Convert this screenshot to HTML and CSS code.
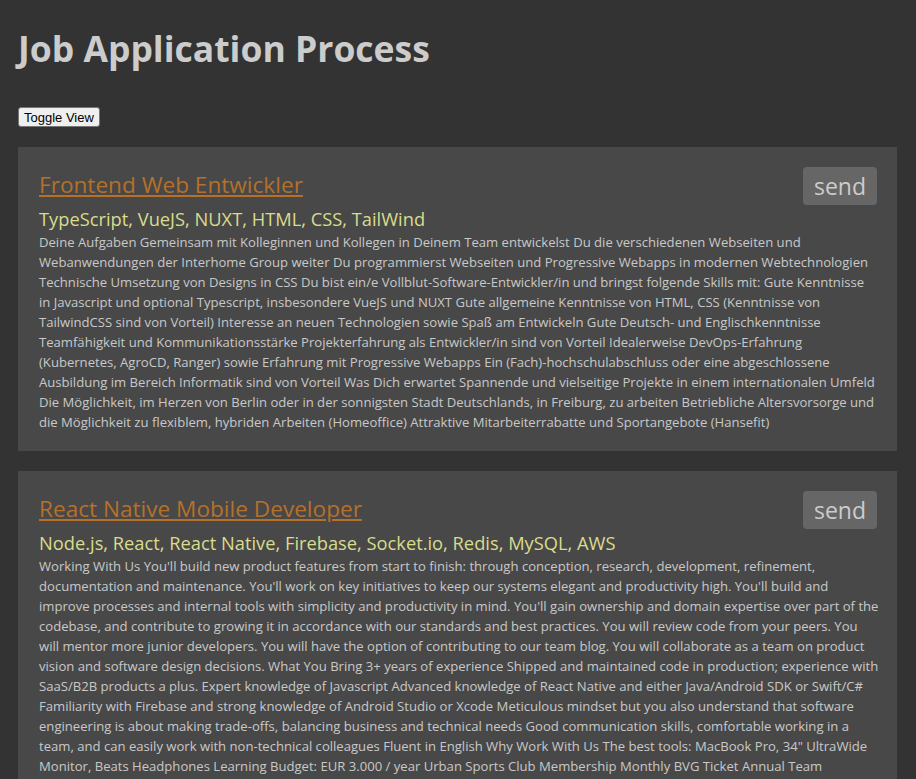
FILE: index.html
```html
<!DOCTYPE html>
<html lang="en">
<head>
<meta charset="utf-8">
<title>Job Application Process</title>
<link rel="stylesheet" href="styles.css">
</head>
<body>
<h1 class="page-title">Job Application Process</h1>
<button class="toggle">Toggle View</button>
<div class="jobs">
  <section class="card">
    <div class="head">
      <div class="head-text">
        <h2 class="title"><a href="#">Frontend Web Entwickler</a></h2>
        <p class="skills">TypeScript, VueJS, NUXT, HTML, CSS, TailWind</p>
      </div>
      <button class="send">send</button>
    </div>
    <p class="desc">Deine Aufgaben Gemeinsam mit Kolleginnen und Kollegen in Deinem Team entwickelst Du die verschiedenen Webseiten und Webanwendungen der Interhome Group weiter Du programmierst Webseiten und Progressive Webapps in modernen Webtechnologien Technische Umsetzung von Designs in CSS Du bist ein/e Vollblut-Software-Entwickler/in und bringst folgende Skills mit: Gute Kenntnisse in Javascript und optional Typescript, insbesondere VueJS und NUXT Gute allgemeine Kenntnisse von HTML, CSS (Kenntnisse von TailwindCSS sind von Vorteil) Interesse an neuen Technologien sowie Spaß am Entwickeln Gute Deutsch- und Englischkenntnisse Teamfähigkeit und Kommunikationsstärke Projekterfahrung als Entwickler/in sind von Vorteil Idealerweise DevOps-Erfahrung (Kubernetes, AgroCD, Ranger) sowie Erfahrung mit Progressive Webapps Ein (Fach)-hochschulabschluss oder eine abgeschlossene Ausbildung im Bereich Informatik sind von Vorteil Was Dich erwartet Spannende und vielseitige Projekte in einem internationalen Umfeld Die Möglichkeit, im Herzen von Berlin oder in der sonnigsten Stadt Deutschlands, in Freiburg, zu arbeiten Betriebliche Altersvorsorge und die Möglichkeit zu flexiblem, hybriden Arbeiten (Homeoffice) Attraktive Mitarbeiterrabatte und Sportangebote (Hansefit)</p>
  </section>
  <section class="card">
    <div class="head">
      <div class="head-text">
        <h2 class="title"><a href="#">React Native Mobile Developer</a></h2>
        <p class="skills">Node.js, React, React Native, Firebase, Socket.io, Redis, MySQL, AWS</p>
      </div>
      <button class="send">send</button>
    </div>
    <p class="desc">Working With Us You'll build new product features from start to finish: through conception, research, development, refinement, documentation and maintenance. You'll work on key initiatives to keep our systems elegant and productivity high. You'll build and improve processes and internal tools with simplicity and productivity in mind. You'll gain ownership and domain expertise over part of the codebase, and contribute to growing it in accordance with our standards and best practices. You will review code from your peers. You will mentor more junior developers. You will have the option of contributing to our team blog. You will collaborate as a team on product vision and software design decisions. What You Bring 3+ years of experience Shipped and maintained code in production; experience with SaaS/B2B products a plus. Expert knowledge of Javascript Advanced knowledge of React Native and either Java/Android SDK or Swift/C# Familiarity with Firebase and strong knowledge of Android Studio or Xcode Meticulous mindset but you also understand that software engineering is about making trade-offs, balancing business and technical needs Good communication skills, comfortable working in a team, and can easily work with non-technical colleagues Fluent in English Why Work With Us The best tools: MacBook Pro, 34" UltraWide Monitor, Beats Headphones Learning Budget: EUR 3.000 / year Urban Sports Club Membership Monthly BVG Ticket Annual Team Celebrations Flexible Working Hours</p>
  </section>
</div>
</body>
</html>
```
FILE: styles.css
```css
html {
  background: #333333;
}
body {
  margin: 0;
  padding: 24px 19px 20px 18px;
  background: #333333;
  font-family: "Open Sans", "Noto Sans", sans-serif;
  color: #cccccc;
}
.page-title {
  margin: 0;
  font-size: 35.5px;
  line-height: 48px;
  font-weight: 700;
  color: #cccccc;
}
.toggle {
  margin-top: 35px;
  font-family: "Liberation Sans", Arial, sans-serif;
  font-size: 13px;
  height: 20px;
  padding: 0 5px;
  color: #000;
  background: #efefef;
  border: 1px solid #767676;
  border-radius: 3px;
}
.jobs {
  display: flex;
  flex-direction: column;
  gap: 20px;
  margin-top: 20px;
}
.card {
  background: #484848;
  padding: 20px 18.4px 19px 21px;
}
.head {
  display: flex;
  justify-content: space-between;
  align-items: flex-start;
}
.title {
  margin: 0;
  font-size: 22.6px;
  line-height: 36px;
  font-weight: 400;
}
.title a {
  color: #b5702a;
  text-decoration: underline;
}
.skills {
  margin: 4px 0 0;
  font-size: 18.3px;
  line-height: 24px;
  color: #d8dc8c;
}
.send {
  height: 38px;
  margin-right: 1.6px;
  padding: 0 11px;
  border: none;
  border-radius: 4px;
  background: #666666;
  color: #cccccc;
  font-family: "Open Sans", "Noto Sans", sans-serif;
  font-size: 23px;
  line-height: 38px;
}
.desc {
  margin: 1px 0 0;
  font-size: 13.1px;
  line-height: 20px;
  color: #c8c8c8;
}
```
